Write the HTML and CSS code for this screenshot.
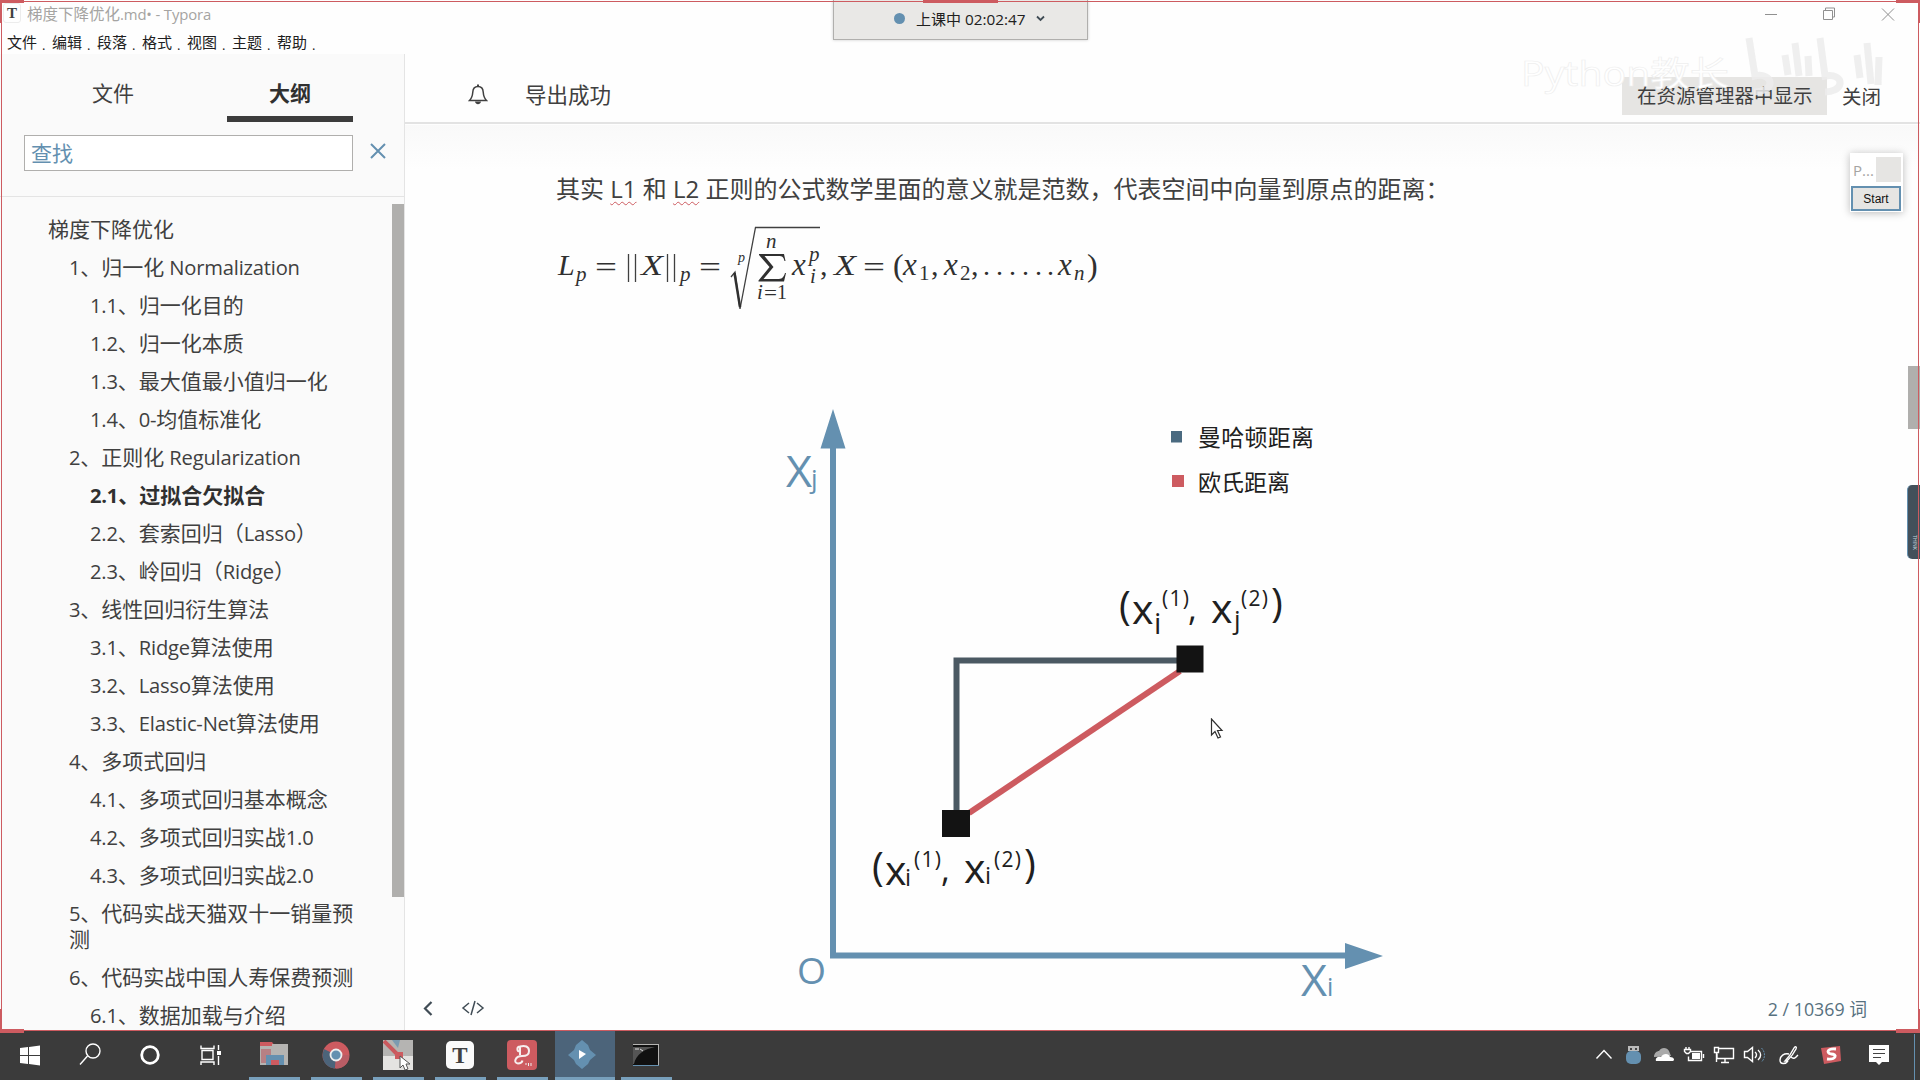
FILE: index.html
```html
<!DOCTYPE html>
<html lang="zh-CN">
<head>
<meta charset="utf-8">
<title>梯度下降优化.md• - Typora</title>
<link rel="stylesheet" href="styles.css">
</head>
<body>
<div class="app">
  <header class="titlebar">
    <span class="app-icon">T</span>
    <span class="doc-title">梯度下降优化<span class="latin">.md• - Typora</span></span>
    <svg class="win-controls" width="152" height="26" viewBox="0 0 152 26">
      <path d="M14 14.500h12M72.500 10.500h9v9h-9zM74.500 10v-2h9v9h-2M131 8.500l12 12M143 8.500l-12 12"/>
    </svg>
  </header>
  <nav class="menu">
    <span>文件</span><span>编辑</span><span>段落</span><span>格式</span><span>视图</span><span>主题</span><span>帮助</span>
  </nav>
  <div class="body">
    <aside class="sidebar">
      <div class="tabs"><span class="tab">文件</span><span class="tab active">大纲</span></div>
      <div class="search">
        <div class="search-box">查找</div>
        <svg width="16" height="16" viewBox="0 0 16 16"><path d="M1 1l14 14M15 1L1 15"/></svg>
      </div>
      <div class="outline">
        <ul class="tree">
          <li>梯度下降优化</li>
          <li class="l2"><span class="latin">1</span>、归一化<span class="latin"> Normalization</span></li>
          <li class="l3"><span class="latin">1.1</span>、归一化目的</li>
          <li class="l3"><span class="latin">1.2</span>、归一化本质</li>
          <li class="l3"><span class="latin">1.3</span>、最大值最小值归一化</li>
          <li class="l3"><span class="latin">1.4</span>、<span class="latin">0-</span>均值标准化</li>
          <li class="l2"><span class="latin">2</span>、正则化<span class="latin"> Regularization</span></li>
          <li class="l3 current"><span class="latin">2.1</span>、过拟合欠拟合</li>
          <li class="l3"><span class="latin">2.2</span>、套索回归（<span class="latin">Lasso</span>）</li>
          <li class="l3"><span class="latin">2.3</span>、岭回归（<span class="latin">Ridge</span>）</li>
          <li class="l2"><span class="latin">3</span>、线性回归衍生算法</li>
          <li class="l3"><span class="latin">3.1</span>、<span class="latin">Ridge</span>算法使用</li>
          <li class="l3"><span class="latin">3.2</span>、<span class="latin">Lasso</span>算法使用</li>
          <li class="l3"><span class="latin">3.3</span>、<span class="latin">Elastic-Net</span>算法使用</li>
          <li class="l2"><span class="latin">4</span>、多项式回归</li>
          <li class="l3"><span class="latin">4.1</span>、多项式回归基本概念</li>
          <li class="l3"><span class="latin">4.2</span>、多项式回归实战<span class="latin">1.0</span></li>
          <li class="l3"><span class="latin">4.3</span>、多项式回归实战<span class="latin">2.0</span></li>
          <li class="l2"><span class="latin">5</span>、代码实战天猫双十一销量预测</li>
          <li class="l2"><span class="latin">6</span>、代码实战中国人寿保费预测</li>
          <li class="l3"><span class="latin">6.1</span>、数据加载与介绍</li>
        </ul>
        <div class="side-scroll"></div>
      </div>
    </aside>
    <main class="content">
      <div class="notice">
        <svg class="bell" width="20" height="22" viewBox="0 0 20 22"><path class="line" d="M1.500 16.500C4 14 4.500 12 4.800 8C5 4 7 2.500 10 2.500S15 4 15.200 8C15.500 12 16 14 18.500 16.500Z"/><path class="solid" d="M9 0.500h2v2H9zM7 17.500h6c-.5 3.500-5.500 3.500-6 0z"/></svg>
        <span class="notice-text">导出成功</span>
        <span class="show-btn">在资源管理器中显示</span>
        <span class="close-btn">关闭</span>
      </div>
      <article class="doc">
        <p class="para">其实 <span class="typo">L1</span> 和 <span class="typo">L2</span> 正则的公式数学里面的意义就是范数，代表空间中向量到原点的距离：</p>
        <svg class="formula" width="560" height="96" viewBox="550 222 560 96">
          <g class="mi">
            <text x="558" y="276" font-size="30">L</text><text x="576" y="282" font-size="21">p</text>
            <text x="641" y="276" font-size="30" textLength="22" lengthAdjust="spacingAndGlyphs">X</text><text x="680" y="282" font-size="21">p</text>
            <text x="738" y="263" font-size="14">p</text>
            <text x="766" y="249" font-size="21">n</text><text x="757" y="300" font-size="21">i</text>
            <text x="792" y="276" font-size="31">x</text><text x="809" y="262" font-size="21">p</text><text x="810" y="284" font-size="21">i</text>
            <text x="834" y="276" font-size="30" textLength="22" lengthAdjust="spacingAndGlyphs">X</text>
            <text x="903" y="276" font-size="31">x</text><text x="944" y="276" font-size="31">x</text><text x="1058" y="276" font-size="31">x</text><text x="1074" y="281" font-size="21">n</text>
          </g>
          <g class="mn">
            <text x="595" y="278" font-size="30" textLength="22" lengthAdjust="spacingAndGlyphs">=</text><text x="699" y="278" font-size="30" textLength="22" lengthAdjust="spacingAndGlyphs">=</text><text x="863" y="278" font-size="30" textLength="22" lengthAdjust="spacingAndGlyphs">=</text>
            <text x="764" y="301" font-size="21" textLength="13" lengthAdjust="spacingAndGlyphs">=</text><text x="777" y="300" font-size="20">1</text>
            <text x="820" y="276" font-size="30">,</text><text x="893" y="277" font-size="32">(</text>
            <text x="919" y="281" font-size="21">1</text><text x="931" y="276" font-size="30">,</text>
            <text x="960" y="281" font-size="21">2</text><text x="971" y="276" font-size="30">,</text>
            <text y="276" font-size="28" x="983 996 1009 1022 1035 1047">......</text>
            <text x="1087" y="277" font-size="32">)</text>
          </g>
          <path class="thin" d="M628.500 255v28M635.500 255v28M667.500 255v28M674.500 255v28M731 278l4-5 5 37L755.500 228.500H820"/>
          <path class="bold" d="M734.500 274l5.500 34"/>
          <path class="sigma" d="M759 255h25l1.500 7h-1c-1-4-2-5-6-5h-14l9 11-10 12h14c4 0 6-1 7.500-6h1l-2 8.500h-25.500v-1l11-13.500-10.500-12z"/>
        </svg>
        <svg class="chart" width="640" height="620" viewBox="770 400 640 620">
          <path class="axis" d="M833 445V956.500H1350"/>
          <path class="axis-fill" d="M833 410l12.500 39.500h-25zM1383 957l-38 13v-26z"/>
          <path class="manhattan" d="M956.500 812V661.500H1178"/>
          <path class="euclid" d="M969 814L1180 672"/>
          <path class="point" d="M1176.500 646.500h27v27h-27zM942 811h28v27h-28z"/>
          <g class="axis-label">
            <text x="786" y="488" font-size="43" textLength="26" lengthAdjust="spacingAndGlyphs">X</text><text x="811" y="489" font-size="26">j</text>
            <text x="1301" y="996.500" font-size="43" textLength="26" lengthAdjust="spacingAndGlyphs">X</text><text x="1327" y="996.500" font-size="25">i</text>
            <text x="797" y="984.500" font-size="36" textLength="29" lengthAdjust="spacingAndGlyphs">O</text>
          </g>
          <g class="coord">
            <text x="1119" y="621" font-size="40">(</text><text x="1132" y="625" font-size="41">x</text><text x="1154" y="635" font-size="29">i</text><text x="1162" y="607" font-size="21" textLength="27">(1)</text><text x="1188" y="622" font-size="34">,</text>
            <text x="1211" y="624" font-size="41">x</text><text x="1234" y="630" font-size="26">j</text><text x="1241" y="607" font-size="21" textLength="27">(2)</text><text x="1271" y="618" font-size="40">)</text>
            <text x="872" y="882" font-size="40">(</text><text x="885" y="886" font-size="41">x</text><text x="905" y="886.500" font-size="24">i</text><text x="914" y="868" font-size="21" textLength="27">(1)</text><text x="941" y="883" font-size="34">,</text>
            <text x="964" y="884" font-size="41">x</text><text x="985" y="885" font-size="24">i</text><text x="994" y="868" font-size="21" textLength="27">(2)</text><text x="1024" y="879" font-size="40">)</text>
          </g>
          <path class="key-blue" d="M1171 432h11v11.500h-11z"/><path class="key-red" d="M1172 476h12v12h-12z"/>
          <text class="legend" x="1198" y="447" textLength="116">曼哈顿距离</text>
          <text class="legend" x="1198" y="491.500" textLength="92">欧氏距离</text>
        </svg>
      </article>
      <footer class="status">
        <svg width="62" height="18" viewBox="0 0 62 18"><path class="back" d="M8.500 3L2 9.500 8.500 16"/><path class="code" d="M46 4l-6 5 6 5M54 4l6 5-6 5M52 2l-4 14"/></svg>
        <span class="count">2 / 10369 词</span>
      </footer>
      <div class="doc-scroll"></div>
    </main>
  </div>
</div>

<div class="taskbar">
  <div class="system">
    <svg viewBox="0 0 62 49"><path class="white" d="M20 17l8-1v8h-8zM29 16l11-1.500V24H29zM20 25h8v8l-8-1zM29 25h11v9.500L29 33z"/></svg>
    <svg viewBox="0 0 62 49"><path class="stroke" d="M18 33.500l7.500-8.500"/><circle class="stroke" cx="31" cy="20" r="7"/></svg>
    <svg viewBox="0 0 62 49"><circle class="ring" cx="26" cy="24" r="8.300"/></svg>
    <svg viewBox="0 0 62 49"><path class="stroke" d="M15 14.500v3h13v-3M16 19.500h11v9H16zM15 34v-3h13v3M32.500 14v5M32.500 25v9"/><path class="white" d="M31 20h4v4h-4z"/></svg>
  </div>
  <div class="running">
    <span class="task"><svg viewBox="0 0 30 30"><path class="red" d="M1 2h12l3 4H1z"/><path class="folder" d="M13 4h16v21H1V6h12z"/><path class="rose" d="M2 9h10v14H2z" opacity=".6"/><path class="blue" d="M7 15h18v10h-5v-5h-8v5H7z"/><path class="red" d="M12 20h8v5h-8z"/></svg></span>
    <span class="task"><svg viewBox="0 0 30 30"><circle class="red" cx="15" cy="15" r="13.500"/><path class="navy" d="M15 15L3 9C-1 18 4 28 14 28.500z"/><path class="rose" d="M15 15h13c1 8-6 14-13 13.500z"/><circle class="blue" cx="15" cy="15" r="5.500" stroke="#eee" stroke-width="1.800"/></svg></span>
    <span class="task"><svg viewBox="0 0 30 30"><path fill="#b5b4b2" d="M0 0h30v30H0z"/><path fill="#e4e3e1" d="M0 16h30v14H0z"/><path d="M1 1l16 16" stroke="#c9595e" stroke-width="4"/><path class="blue" d="M9 0h8l-2 8z" opacity=".7"/><path class="red" d="M12 12h8v7h-8z"/><path fill="#fff" stroke="#555" d="M17 16v12l3-3 2 5 3-1-2-5h4z"/></svg></span>
    <span class="task"><svg viewBox="0 0 30 30"><rect x="1" y="1" width="28" height="28" rx="5" fill="#fafafa"/><text class="t-logo" x="15" y="23" text-anchor="middle">T</text></svg></span>
    <span class="task"><svg viewBox="0 0 30 30"><rect class="red" width="30" height="30" rx="4"/><path d="M13 11.500c-3.500 0-3.500-5 0-5 5-1.500 9 0 9 4.500s-3 5-7 5c-7 0-9 7-4 7.500 3 0 4-1 4.500-3M13 7v8" fill="none" stroke="#f6eeee" stroke-width="2"/><path d="M18 24h2M21.500 23v3M24 23v3" stroke="#eee"/></svg></span>
    <span class="task on"><svg viewBox="0 0 30 30"><path class="blue" d="M9 5l6-5 6 5 2 5 6 5-6 5-2 4-6 5-6-5-2-4-6-5 6-5z"/><path class="white" d="M12 10l7 4-7 5z"/></svg></span>
    <span class="task"><svg viewBox="0 0 30 30"><path fill="#111" d="M2 4h26v22H2z"/><path fill="#555" d="M2 7h22C14 9 5 14 3 24H2z"/><path d="M2 4.500h26M27.500 4v21" stroke="#b5b4b2"/><path d="M2 25.500h26" stroke="#6490b0"/><path d="M4 9h4M9 9l3 2" stroke="#ddd"/></svg></span>
  </div>
  <svg class="tray" width="330" height="49" viewBox="1590 1031 330 49">
    <path class="stroke" d="M1596.500 1058.500l7.500-8 7.500 8"/>
    <rect x="1626" y="1051" width="15" height="13" rx="5" class="blue"/><path fill="#bbb" d="M1628 1046h11v5h-11z"/><path fill="#444" d="M1630 1048h2v2h-2zM1635 1048h2v2h-2z"/>
    <path fill="#aaa" d="M1654 1057c0-4 3-6 5-6 2-4 8-4 10 0l2 5z"/><path class="white" d="M1656 1061c-1-3 2-5 5-4 2-4 8-4 9 0 4 0 5 3 3 4z"/>
    <path class="stroke" d="M1690 1051.500h11.500v9H1688.500v-4M1703.500 1054v4M1686 1047v2.500M1689 1047v2.500M1684.500 1049.500h6v2l-2 2h-2l-2-2z"/><path class="white" d="M1692 1053h8v6h-8z"/>
    <path class="stroke" d="M1719 1048.500h14.500v10H1717v-5M1725 1059v3M1721 1062.500h8M1714.500 1047.500h4v5h-4zM1716.500 1053v9"/>
    <path class="stroke" d="M1744.500 1051.500h3l5-4v14l-5-4h-3zM1755 1052c2 1.500 2 4 0 6M1758 1050c3.500 3 3.500 7 0 10"/><path class="wave" d="M1761.500 1048c4 4 4 10 0 14"/>
    <path class="stroke" d="M1785 1061c4-4 7-9 9-13 1.500-2.500 3-1 2 1-2 4-5 8-9 12zM1789 1054c-5-1-9 2-9 6 0 5 6 4 8 1M1791 1057c3 3 5 0 7-2"/>
    <path class="red" d="M1821 1048l19-2 1 15-17 3z"/><path d="M1836 1049c-9-1-10 4-5 5 7 0 5 6-4 5" fill="none" stroke="#fff" stroke-width="2.800"/>
    <path class="white" d="M1869 1045h20v17h-7l-3 3-3-3h-7z"/><path d="M1873 1049.500h12M1873 1053.500h12M1873 1057.500h8" stroke="#444"/>
    <path d="M1914.500 1034v46" stroke="#6490b0"/>
  </svg>
</div>

<div class="timer"><i class="dot"></i><span>上课中 <span class="time">02:02:47</span></span><svg width="9" height="7" viewBox="0 0 9 7"><path d="M1 1.500l3.500 3.500L8 1.500"/></svg></div>

<div class="mini"><div class="mini-top"><span>P...</span><i></i></div><div class="mini-btn">Start</div></div>
<div class="dock"><i>THINK</i></div>

<svg class="watermark" width="380" height="70" viewBox="1510 32 380 70">
  <text x="1521" y="86" textLength="208" lengthAdjust="spacingAndGlyphs">Python教长</text>
  <path class="logo" d="M1749 38l6 38c7-2 16 1 15 8-1 5-8 8-16 8M1785 55l3 20M1795 43l4 33M1808 56l1 20M1820 38l5 38c9-2 16 2 15 8-1 5-8 8-15 8M1857 55l3 23M1867 43l4 41M1879 57l-1 28"/>
</svg>

<svg class="cursor" width="16" height="22" viewBox="0 0 16 22"><path d="M1.500 1v16l3.500-3.500 3 6.500 2.500-1-3-6.500H12z"/></svg>
<div class="frame"><i class="c1"></i><i class="c2"></i><i class="c3"></i><i class="c4"></i><i class="c5"></i><i class="c6"></i><i class="c7"></i></div>
</body>
</html>
```

FILE: styles.css
```css
* { box-sizing: border-box; }
body { margin: 0; width: 1920px; height: 1080px; overflow: hidden; background: #fefefe; color: #404040;
  font-family: "Open Sans", "Noto Sans CJK SC", sans-serif; display: flex; flex-direction: column; position: relative; }
svg { display: block; flex: none; }
.latin { font-size: .96em; line-height: 0; white-space: pre; letter-spacing: -.01em; }

.app { height: 1031px; display: flex; flex-direction: column; }
.titlebar { height: 30px; display: flex; align-items: center; padding: 0 17px 4px 3px; color: #a5a4a2; font-size: 15.500px; }
.app-icon { width: 18px; height: 20px; border: 1px solid #ececec; border-radius: 3px; font: bold 15px/18px "Liberation Serif", serif; text-align: center; color: #404040; }
.doc-title { margin-left: 6px; flex: 1; }
.win-controls path { fill: none; stroke: #909090; }
.menu { height: 24px; display: flex; padding-left: 7px; font-size: 15px; line-height: 25px; color: #202020; }
.menu span { width: 45px; }
.menu span::after { content: "."; margin-left: 5px; font-size: 13px; position: relative; top: 2px; }

.body { flex: 1; min-height: 0; display: flex; }
.sidebar { width: 405px; background: #fafafa; border-right: 1px solid #e4e4e4; display: flex; flex-direction: column; }
.tabs { height: 68px; display: flex; padding-left: 50px; gap: 51px; font-size: 21px; }
.tab { width: 126px; height: 68px; text-align: center; line-height: 78px; }
.tab.active { font-weight: 700; border-bottom: 6px solid #3c3c3c; color: #303030; }
.search { height: 75px; display: flex; align-items: center; padding: 0 19px 13px 24px; gap: 17px; border-bottom: 1px solid #e4e4e4; }
.search-box { flex: none; width: 329px; height: 36px; border: 1px solid #b0afad; background: #fff; font-size: 21px; line-height: 34px; padding-left: 6px; color: #6490b0; }
.search svg { margin-top: -4px; }
.search svg path { stroke: #6490b0; stroke-width: 2; }
.outline { flex: 1; min-height: 0; display: flex; justify-content: space-between; overflow: hidden; }
.tree { list-style: none; margin: 0; padding: 13px 0 0 48px; width: 358px; font-size: 21px; line-height: 26px; color: #404040; }
.tree li { padding: 6px 0; }
.tree .l2 { padding-left: 21px; }
.tree .l3 { padding-left: 42px; }
.tree .current { font-weight: 700; color: #303030; }
.side-scroll { width: 12px; height: 693px; margin-top: 7px; background: #b0afad; }

.content { flex: 1; position: relative; display: flex; flex-direction: column;
  background: linear-gradient(#f9f9f9, #fefefe 45px) 0 71px / 100% 45px no-repeat #fefefe; }
.notice { height: 70px; border-bottom: 2px solid #e3e3e3; background: #fefefe; display: flex; align-items: center; padding: 12px 39px 0 63px; font-size: 21.500px; }
.bell { margin-top: 2px; }
.bell .line { fill: none; stroke: #404040; stroke-width: 1.500; }
.bell .solid { fill: #404040; }
.notice-text { margin: -2px 0 0 37px; flex: 1; }
.show-btn { background: #e6e5e3; height: 38px; line-height: 38px; margin-top: 4px; padding: 0 15px; font-size: 19.500px; width: 205px; white-space: nowrap; }
.close-btn { margin-left: 15px; font-size: 19.500px; margin-top: 2px; }
.doc { flex: 1; min-height: 0; padding: 46px 0 0 145px; overflow: hidden; }
.para { margin: 0 0 0 6px; font-size: 24px; line-height: 38px; white-space: nowrap; }
.typo { text-decoration: underline wavy #cd5b60 1px; text-underline-offset: 3px; text-decoration-skip-ink: none; }
.formula { margin-top: 13px; }
.mi { font-family: "Liberation Serif", serif; font-style: italic; fill: #303030; }
.mn { font-family: "Liberation Serif", serif; fill: #303030; }
.thin { fill: none; stroke: #404040; stroke-width: 1.300; }
.bold { fill: none; stroke: #303030; stroke-width: 2.500; }
.sigma { fill: #303030; }
.chart { margin: 82px 0 0 220px; }
.axis { fill: none; stroke: #6490b0; stroke-width: 6; }
.axis-fill, .axis-label { fill: #6490b0; }
.axis-label, .coord { font-family: "Open Sans", sans-serif; }
.coord { fill: #202020; }
.manhattan { fill: none; stroke: #4b5963; stroke-width: 6; }
.euclid { stroke: #cd5b60; stroke-width: 6; }
.point { fill: #131313; }
.key-blue { fill: #4a6a80; }
.key-red { fill: #cd5b60; }
.legend { font-size: 23px; fill: #202020; font-family: "Noto Sans CJK SC", sans-serif; }
.status { position: absolute; left: 18px; right: 53px; bottom: 11px; height: 24px; display: flex; align-items: center; justify-content: space-between; font-size: 17.800px; color: #57717f; }
.status path { fill: none; stroke: #404c55; stroke-width: 1.500; }
.status .back { stroke-width: 2.200; }
.doc-scroll { position: absolute; right: 0; top: 312px; width: 12px; height: 63px; background: #b0afad; }

.taskbar { height: 49px; background: #3b3b3b; display: flex; }
.system { display: flex; width: 249px; }
.system svg { width: 62px; height: 49px; }
.running { display: flex; gap: 11px; flex: 1; }
.task { width: 51px; height: 49px; display: flex; align-items: flex-start; justify-content: center; padding: 9px 2px 0 0; border-bottom: 3px solid #78a0bc; }
.task svg { width: 30px; height: 30px; }
.task.on { width: 60px; margin: 0 -5px 0 -4px; background: #4c647a; padding-right: 6px; }
.white { fill: #fff; }
.red { fill: #cd5b60; }
.rose { fill: #b95d65; }
.blue { fill: #6490b0; }
.navy { fill: #4c647a; }
.folder { fill: #b5b4b2; }
.stroke { fill: none; stroke: #fff; stroke-width: 1.400; }
.ring { fill: none; stroke: #fff; stroke-width: 2.800; }
.wave { fill: none; stroke: #6490b0; stroke-dasharray: 2 1; }
.t-logo { font: bold 23px "Liberation Serif", serif; fill: #404040; }

.timer { position: absolute; left: 833px; top: 0; width: 255px; height: 40px; background: #e9e8e6; border: 1px solid #b0afad; border-top: 0; box-shadow: 0 0 3px #ccc; display: flex; align-items: center; padding: 0 0 2px 60px; gap: 11px; font-size: 15px; color: #202020; white-space: nowrap; }
.timer .dot { width: 11px; height: 11px; border-radius: 50%; background: #6490b0; }
.time { font-size: 15.300px; }
.timer path { fill: none; stroke: #404c55; stroke-width: 1.800; }

.mini { position: absolute; left: 1850px; top: 153px; width: 53px; height: 59px; background: #fff; box-shadow: 0 1px 8px #bbb; }
.mini-top { height: 33px; display: flex; justify-content: space-between; align-items: center; padding: 0 2px 0 3px; font-size: 15px; color: #a5a4a2; }
.mini-top i { width: 25px; height: 25px; background: #e6e5e3; }
.mini-btn { margin: 0 2px 0 1px; height: 25px; border: 2px solid #6490b0; background: #e6e5e3; color: #111; font: 12px/22px "Liberation Sans", sans-serif; text-align: center; }
.dock { position: absolute; left: 1907px; top: 485px; width: 13px; height: 74px; border-radius: 5px 0 0 5px; background: #43505a; border-left: 1px solid #6490b0; padding: 50px 0 0 3px; }
.dock i { display: block; width: 7px; font: 5px/7px "Liberation Sans", sans-serif; color: #c6d3dc; writing-mode: vertical-rl; }

.watermark { position: absolute; left: 1510px; top: 32px; }
.watermark text { font: 34px "Open Sans", "Noto Sans CJK SC", sans-serif; fill: #fff; stroke: #efefef; stroke-width: .7; }
.logo { fill: none; stroke: #ececec; stroke-width: 7; opacity: .85; }
.cursor { position: absolute; left: 1210px; top: 718px; }
.cursor path { fill: #fff; stroke: #303030; stroke-width: 1.200; }

.frame { position: absolute; left: 1px; top: 1px; width: 1918px; height: 1030px; border: 1px solid #cd5b60; }
.frame i { position: absolute; background: #cd5b60; }
.c1, .c2 { top: -2px; width: 24px; height: 3px; }
.c1 { left: -2px; }
.c2 { right: -2px; }
.c3 { left: 921px; top: -2px; width: 75px; height: 3px; }
.c4, .c5 { bottom: -3px; width: 24px; height: 4px; }
.c4 { left: -2px; }
.c5 { right: -2px; }
.c6, .c7 { right: -2px; width: 2px; height: 23px; }
.c6 { top: -2px; }
.c7 { bottom: -2px; }
.frame::before, .frame::after { content: ""; position: absolute; left: -2px; width: 2px; height: 23px; top: -2px; background: #cd5b60; }
.frame::after { top: auto; bottom: -2px; }
```
